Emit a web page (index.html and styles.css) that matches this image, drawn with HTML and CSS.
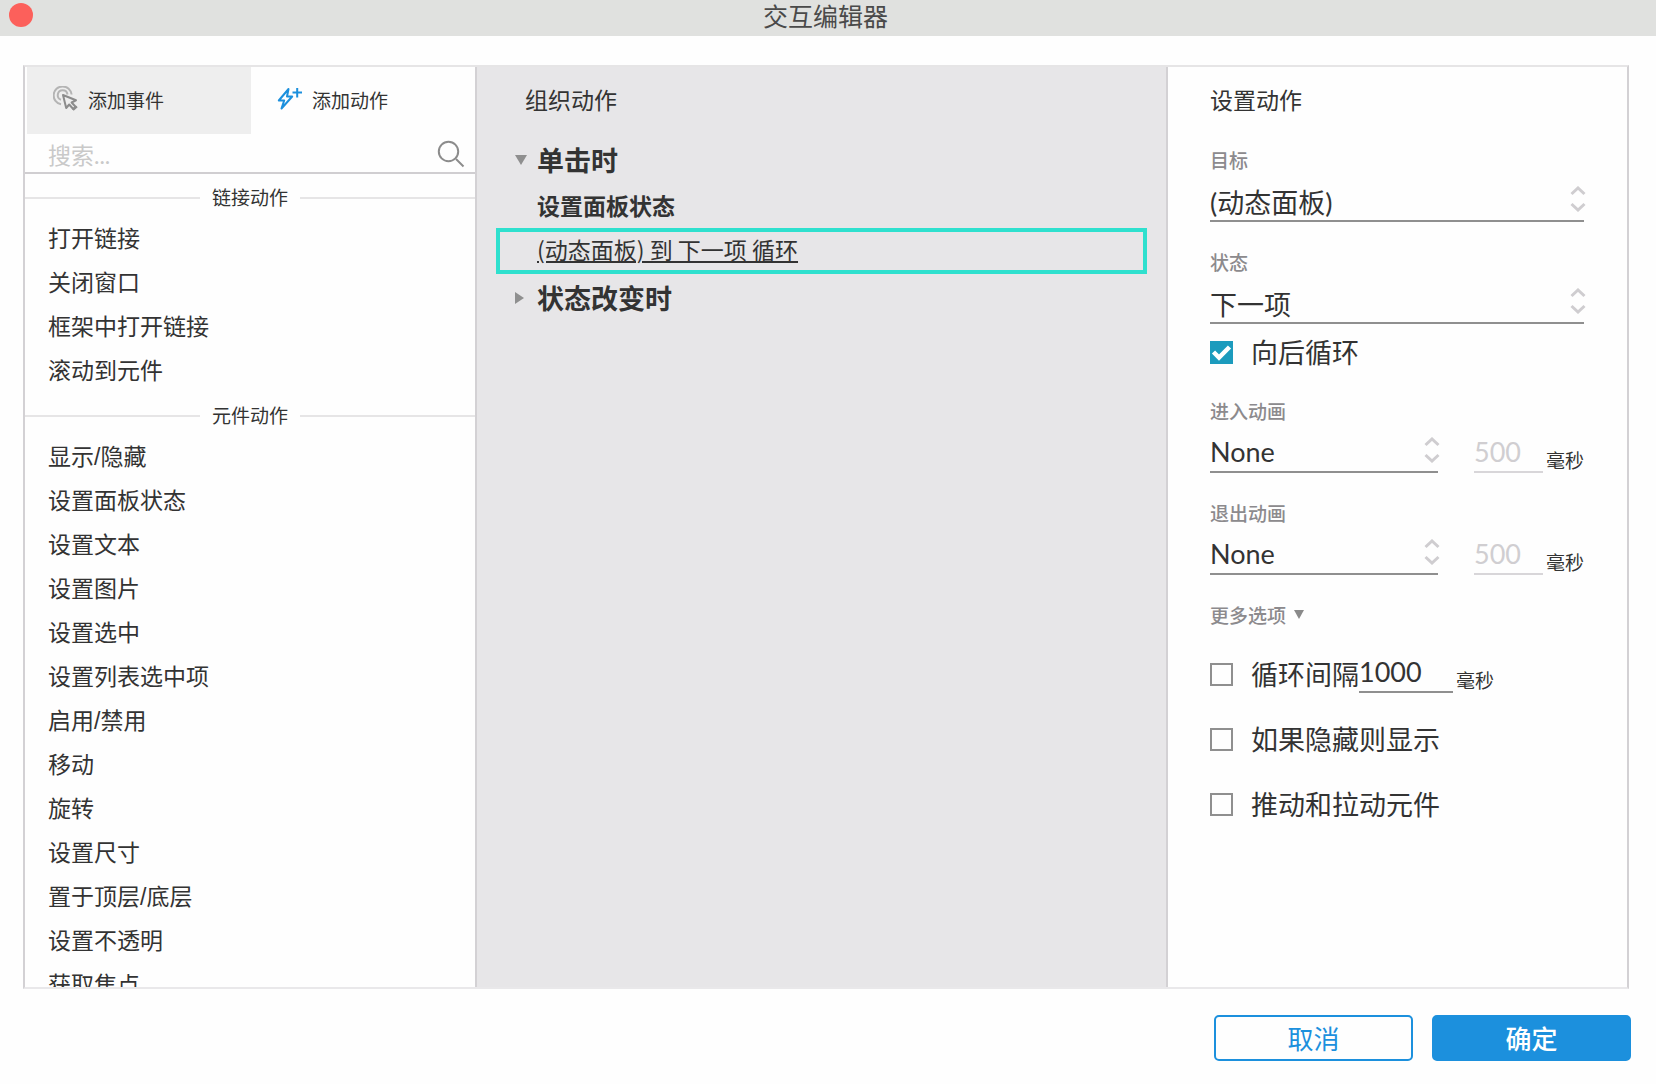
FILE: index.html
```html
<!DOCTYPE html>
<html lang="zh-CN">
<head>
<meta charset="utf-8">
<meta name="viewport" content="width=device-width, initial-scale=1">
<title>交互编辑器</title>
<link rel="stylesheet" href="styles.css">
</head>
<body>
<header class="titlebar">
  <button class="close" type="button" aria-label="关闭"></button>
  <h1 class="title">交互编辑器</h1>
</header>

<main class="editor">
  <section class="library">
    <div class="tabs">
      <button class="tab" type="button">
        <svg width="26" height="26" viewBox="0 0 26 26" fill="none" stroke="#b4b4b4" stroke-width="2">
          <path d="M8 18.300A9 9 0 1 1 18.600 8.500"/>
          <path d="M8 13.800A4.900 4.900 0 1 1 14.500 8.500"/>
          <path d="M10 9l3.200 13 3-3.500 4 4.500 2.400-2.200-4-4.300 4.400-2.200z" fill="#eee" stroke="#8c8c8c" stroke-width="2" stroke-linejoin="round"/>
          <path d="M20 24l4-3.500" stroke="#8c8c8c"/>
        </svg>
        添加事件
      </button>
      <button class="tab tab-active" type="button">
        <svg width="26" height="26" viewBox="0 0 26 26" fill="none" stroke="#1c90dd" stroke-width="2">
          <path d="M11.500 3L1.800 14.500h5.400L4.500 22.500 15.200 10.500H10z" stroke-linejoin="round"/>
          <path d="M15.500 6.500H25M20.200 2v9.500"/>
        </svg>
        添加动作
      </button>
    </div>
    <label class="search">
      <input class="search-input" type="text" placeholder="搜索..." aria-label="搜索">
      <svg width="28" height="28" viewBox="0 0 28 28" fill="none" stroke="#8c8c8c" stroke-width="2">
        <circle cx="11.500" cy="11.500" r="9.700"/>
        <path d="M19 19l7.500 7.500"/>
      </svg>
    </label>
    <div class="actions">
      <h2 class="group">链接动作</h2>
      <ul class="list">
        <li>打开链接</li>
        <li>关闭窗口</li>
        <li>框架中打开链接</li>
        <li>滚动到元件</li>
      </ul>
      <h2 class="group">元件动作</h2>
      <ul class="list">
        <li>显示/隐藏</li>
        <li>设置面板状态</li>
        <li>设置文本</li>
        <li>设置图片</li>
        <li>设置选中</li>
        <li>设置列表选中项</li>
        <li>启用/禁用</li>
        <li>移动</li>
        <li>旋转</li>
        <li>设置尺寸</li>
        <li>置于顶层/底层</li>
        <li>设置不透明</li>
        <li>获取焦点</li>
      </ul>
    </div>
  </section>

  <section class="organize">
    <h2 class="heading">组织动作</h2>
    <div class="event">
      <svg width="12" height="12" viewBox="0 0 12 12"><path d="M0 1h12L6 11z" fill="#8f8f8f"/></svg>
      单击时
    </div>
    <div class="action">设置面板状态</div>
    <div class="case"><a href="#target">(动态面板) 到 下一项 循环</a></div>
    <div class="event">
      <svg width="12" height="12" viewBox="0 0 12 12"><path d="M0 0l9 6-9 6z" fill="#8f8f8f"/></svg>
      状态改变时
    </div>
  </section>

  <section class="settings">
    <h2 class="heading">设置动作</h2>

    <div class="field">
      <label class="label" for="target">目标</label>
      <div class="picker picker-wide">
        <select id="target"><option>(动态面板)</option></select>
        <svg class="arrows" width="16" height="26" viewBox="0 0 16 26"><path d="M1.500 8L8 2l6.500 6M1.500 18L8 24l6.500-6"/></svg>
      </div>
    </div>

    <div class="field">
      <label class="label" for="state">状态</label>
      <div class="picker picker-wide">
        <select id="state"><option>下一项</option></select>
        <svg class="arrows" width="16" height="26" viewBox="0 0 16 26"><path d="M1.500 8L8 2l6.500 6M1.500 18L8 24l6.500-6"/></svg>
      </div>
    </div>

    <div class="wrap">
      <input class="box" type="checkbox" id="wrap" checked>
      <label for="wrap">向后循环</label>
    </div>

    <div class="field">
      <label class="label" for="enter">进入动画</label>
      <div class="row">
        <div class="picker">
          <select id="enter"><option>None</option></select>
          <svg class="arrows" width="16" height="26" viewBox="0 0 16 26"><path d="M1.500 8L8 2l6.500 6M1.500 18L8 24l6.500-6"/></svg>
        </div>
        <input class="number" id="enter-ms" type="text" value="500" disabled>
        <label class="unit" for="enter-ms">毫秒</label>
      </div>
    </div>

    <div class="field">
      <label class="label" for="leave">退出动画</label>
      <div class="row">
        <div class="picker">
          <select id="leave"><option>None</option></select>
          <svg class="arrows" width="16" height="26" viewBox="0 0 16 26"><path d="M1.500 8L8 2l6.500 6M1.500 18L8 24l6.500-6"/></svg>
        </div>
        <input class="number" id="leave-ms" type="text" value="500" disabled>
        <label class="unit" for="leave-ms">毫秒</label>
      </div>
    </div>

    <button class="more" type="button">
      更多选项
      <svg width="10" height="12" viewBox="0 0 10 12"><path d="M0 1h10L5 10z" fill="#8a8a8a"/></svg>
    </button>

    <div class="option">
      <input class="box" type="checkbox" id="interval">
      <label for="interval">循环间隔</label>
      <input class="number interval" id="interval-ms" type="text" value="1000">
      <label class="unit" for="interval-ms">毫秒</label>
    </div>
    <div class="option">
      <input class="box" type="checkbox" id="reveal">
      <label for="reveal">如果隐藏则显示</label>
    </div>
    <div class="option">
      <input class="box" type="checkbox" id="push">
      <label for="push">推动和拉动元件</label>
    </div>
  </section>
</main>

<footer class="footer">
  <button class="btn" type="button">取消</button>
  <button class="btn btn-primary" type="button">确定</button>
</footer>
</body>
</html>
```
FILE: styles.css
```css
* {
  box-sizing: border-box;
}

body {
  margin: 0;
  height: 100vh;
  display: flex;
  flex-direction: column;
  background: #fefefe;
  color: #333;
  font-family: "Noto Sans CJK SC", sans-serif;
  font-size: 23px;
}

h1,
h2,
ul {
  margin: 0;
  padding: 0;
  font-weight: 400;
  list-style: none;
}

button,
input,
select {
  margin: 0;
  padding: 0;
  border: 0;
  border-radius: 0;
  background: none;
  color: inherit;
  font: inherit;
}

svg {
  flex: none;
}

/* Title bar */
.titlebar {
  flex: none;
  display: grid;
  grid-template-columns: 1fr auto 1fr;
  align-items: center;
  height: 36px;
  padding: 0 14px 6px 9px;
  background: #e0e1df;
}

.close {
  width: 24px;
  height: 24px;
  border-radius: 50%;
  background: #fc605b;
}

.title {
  color: #4a4a4a;
  font-size: 25px;
  line-height: 30px;
}

/* Three-column editor */
.editor {
  flex: 1;
  min-height: 0;
  display: grid;
  grid-template-columns: 452fr 691fr 459fr;
  margin: 29px 27px 0 23px;
  border: 2px solid #d3d1d4;
  border-top-color: #e6e5e6;
  border-bottom-color: #e9e8ea;
}

.library,
.organize,
.settings {
  min-width: 0;
  min-height: 0;
}

.library {
  display: flex;
  flex-direction: column;
  border-right: 2px solid #d3d1d4;
}

.tabs {
  flex: none;
  display: grid;
  grid-template-columns: 1fr 1fr;
  height: 67px;
  padding-left: 2px;
}

.tab {
  display: flex;
  align-items: center;
  gap: 9px;
  padding: 0 0 3px 26px;
  background: #eee;
  font-size: 19px;
}

.tab-active {
  background: none;
}

.search {
  flex: none;
  display: flex;
  align-items: center;
  height: 40px;
  padding: 2px 10px 0 23px;
  border-bottom: 2px solid #d0ced1;
}

.search-input {
  flex: 1;
  min-width: 0;
  height: 36px;
  padding-top: 2px;
  outline: 0;
  font-family: Lato, "Noto Sans CJK SC", sans-serif;
}

.search-input::placeholder {
  color: #c9c9c9;
  opacity: 1;
}

.actions {
  flex: 1;
  min-height: 0;
  overflow: hidden;
}

.group {
  display: flex;
  align-items: center;
  gap: 12px;
  padding-top: 4px;
  font-size: 19px;
  line-height: 38px;
}

.group::before,
.group::after {
  content: "";
  flex: 1;
  height: 2px;
  margin-top: 2px;
  background: #e6e5e6;
}

.list {
  margin: 1px 0 -1px;
  padding-left: 23px;
  font-family: "Liberation Sans", "Noto Sans CJK SC", sans-serif;
  line-height: 44px;
}

/* Event outline */
.organize {
  padding: 19px;
  border-right: 2px solid #d3d1d4;
  background: #e7e6e8;
}

.heading {
  font-size: 23px;
  line-height: 26px;
}

.organize .heading {
  padding-left: 29px;
  margin-bottom: 24px;
}

.event {
  display: flex;
  align-items: center;
  gap: 10px;
  padding-left: 19px;
  font-size: 27px;
  font-weight: 700;
  line-height: 48px;
}

.action {
  margin-bottom: 2px;
  padding-left: 41px;
  font-weight: 700;
  line-height: 42px;
}

.case {
  padding: 0 0 4px 37px;
  border: 4px solid #2fe0ce;
  line-height: 34px;
}

.case a {
  color: inherit;
  text-underline-offset: 2px;
}

/* Action settings */
.settings {
  padding: 19px 43px 19px 42px;
}

.settings .heading {
  margin-bottom: 37px;
}

.field {
  margin-bottom: 29px;
}

.label {
  display: block;
  margin-bottom: 10px;
  color: #8c8a8d;
  font-size: 19px;
  font-weight: 500;
  line-height: 22px;
}

.picker {
  position: relative;
  flex: 1;
  min-width: 0;
}

.picker select {
  display: block;
  width: 100%;
  height: 41px;
  border-bottom: 2px solid #8f8f8f;
  appearance: none;
  font-family: Lato, "Noto Sans CJK SC", sans-serif;
  font-size: 27px;
}

.picker-wide select {
  padding-top: 3px;
}

.arrows {
  position: absolute;
  right: -2px;
  top: 5px;
  fill: none;
  stroke: #cfcdd0;
  stroke-width: 3;
  pointer-events: none;
}

.row {
  display: flex;
  align-items: flex-end;
}

.number {
  width: 69px;
  height: 41px;
  margin-left: 36px;
  border-bottom: 2px solid #8f8f8f;
  font-family: Lato, "Noto Sans CJK SC", sans-serif;
  font-size: 27px;
}

.number:disabled {
  border-color: #d8d6d9;
  color: #d0ced1;
}

.unit {
  margin-left: 3px;
  font-size: 19px;
  line-height: 26px;
}

.wrap,
.option {
  display: flex;
  align-items: center;
  font-size: 27px;
  line-height: 40px;
}

.wrap {
  margin: -21px 0 28px;
}

.option {
  height: 65px;
}

.option label {
  padding-bottom: 2px;
}

.box {
  flex: none;
  width: 23px;
  height: 23px;
  margin-right: 18px;
  border: 2px solid #8f8f8f;
  appearance: none;
}

.box:checked {
  border: 0;
  background: #1c9bbd url("data:image/svg+xml,%3Csvg xmlns='http://www.w3.org/2000/svg' viewBox='0 0 23 23'%3E%3Cpath d='M3.500 11l5.500 5.500L19.500 6' fill='none' stroke='white' stroke-width='4.500'/%3E%3C/svg%3E");
}

.interval {
  width: 94px;
  margin: 0 0 4px;
}

.option .unit {
  align-self: flex-end;
  margin-bottom: 12px;
}

.more {
  display: flex;
  align-items: center;
  gap: 8px;
  margin-bottom: 16px;
  color: #8c8a8d;
  font-size: 19px;
  font-weight: 500;
  line-height: 22px;
}

/* Dialog buttons */
.footer {
  flex: none;
  display: flex;
  justify-content: flex-end;
  gap: 19px;
  padding: 26px 25px 23px;
}

.btn {
  width: 199px;
  height: 46px;
  border: 2px solid #1c90dd;
  border-radius: 5px;
  color: #1c90dd;
  font-size: 26px;
  line-height: 38px;
}

.btn-primary {
  background: #1c90dd;
  color: #fff;
  font-weight: 500;
}
```
